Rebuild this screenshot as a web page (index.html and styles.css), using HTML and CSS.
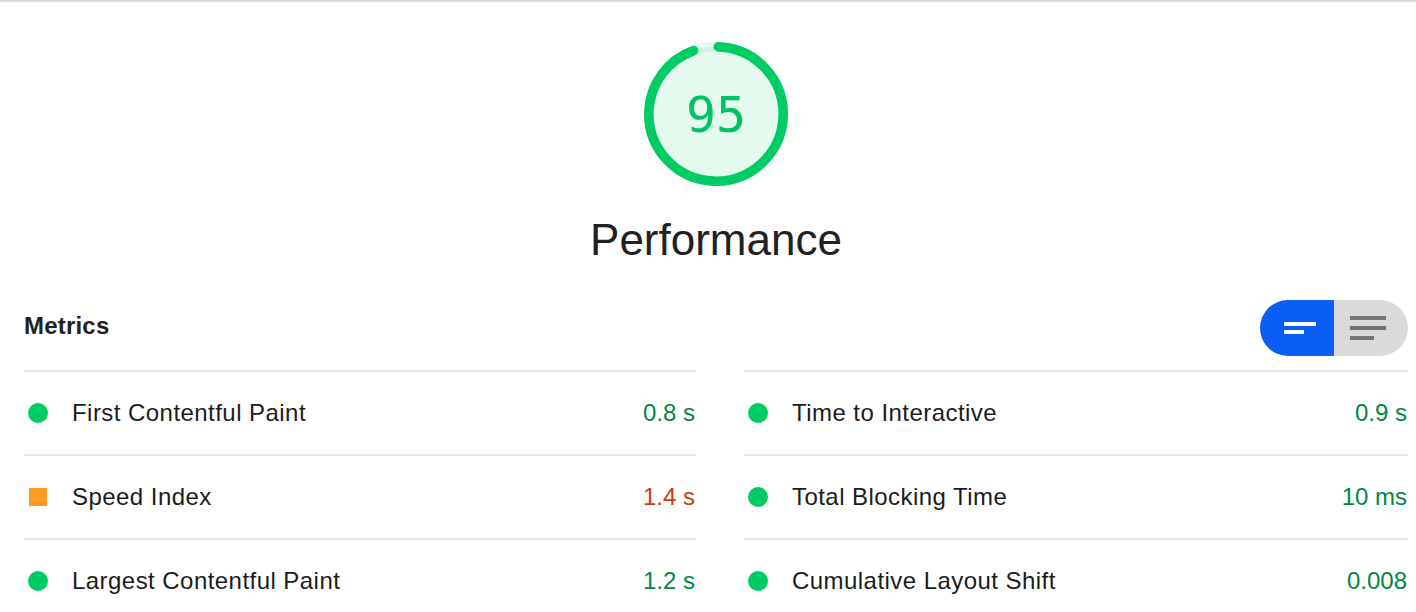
FILE: index.html
```html
<!DOCTYPE html>
<html lang="en">
<head>
<meta charset="utf-8">
<title>Performance</title>
<link rel="stylesheet" href="styles.css">
</head>
<body>
<div class="topbar"></div>
<section class="category">
  <div class="gauge-wrap">
    <div class="gauge">
      <svg class="gauge-svg" viewBox="0 0 120 120" width="144" height="144">
        <circle class="gauge-base" cx="60" cy="60" r="56" stroke-width="8"></circle>
        <circle class="gauge-arc" cx="60" cy="60" r="56" stroke-width="8" transform="rotate(-87.95 60 60)" stroke-dasharray="330.27 351.86"></circle>
      </svg>
      <div class="gauge-pct">95</div>
    </div>
    <div class="gauge-label">Performance</div>
  </div>

  <div class="metrics-header">
    <h2 class="metrics-title">Metrics</h2>
    <div class="toggle">
      <span class="toggle-btn toggle-on">
        <svg width="74" height="56" viewBox="0 0 74 56">
          <rect x="24" y="22" width="32" height="4" fill="#fff"></rect>
          <rect x="24" y="30" width="20" height="4" fill="#fff"></rect>
        </svg>
      </span>
      <span class="toggle-btn toggle-off">
        <svg width="74" height="56" viewBox="0 0 74 56">
          <rect x="16" y="16" width="36" height="4" fill="#757575"></rect>
          <rect x="16" y="26" width="36" height="4" fill="#757575"></rect>
          <rect x="16" y="36" width="24" height="4" fill="#757575"></rect>
        </svg>
      </span>
    </div>
  </div>

  <div class="metrics">
    <div class="metric">
      <span class="icon"><span class="dot"></span></span>
      <span class="metric-name">First Contentful Paint</span>
      <span class="metric-value pass">0.8 s</span>
    </div>
    <div class="metric">
      <span class="icon"><span class="dot"></span></span>
      <span class="metric-name">Time to Interactive</span>
      <span class="metric-value pass">0.9 s</span>
    </div>
    <div class="metric">
      <span class="icon"><span class="square"></span></span>
      <span class="metric-name">Speed Index</span>
      <span class="metric-value average">1.4 s</span>
    </div>
    <div class="metric">
      <span class="icon"><span class="dot"></span></span>
      <span class="metric-name">Total Blocking Time</span>
      <span class="metric-value pass">10 ms</span>
    </div>
    <div class="metric">
      <span class="icon"><span class="dot"></span></span>
      <span class="metric-name">Largest Contentful Paint</span>
      <span class="metric-value pass">1.2 s</span>
    </div>
    <div class="metric">
      <span class="icon"><span class="dot"></span></span>
      <span class="metric-name">Cumulative Layout Shift</span>
      <span class="metric-value pass">0.008</span>
    </div>
  </div>
</section>
</body>
</html>
```

FILE: styles.css
```css
* { box-sizing: border-box; }

html, body {
  margin: 0;
  padding: 0;
  background: #fff;
  color: #212121;
  font-family: "Liberation Sans", Arial, sans-serif;
}

.topbar {
  height: 2px;
  background: #dadada;
}

.category {
  padding: 0 8px 0 24px;
}

.gauge-wrap {
  display: flex;
  flex-direction: column;
  align-items: center;
  padding-top: 40px;
}

.gauge {
  display: grid;
  width: 144px;
  height: 144px;
}

.gauge-svg,
.gauge-pct {
  grid-area: 1 / 1;
}

.gauge-svg {
  display: block;
}

.gauge-base {
  fill: rgba(0, 204, 102, 0.1);
  stroke: rgba(0, 204, 102, 0.1);
}

.gauge-arc {
  fill: none;
  stroke: #00cc66;
  stroke-linecap: round;
}

.gauge-pct {
  align-self: center;
  justify-self: center;
  font-family: "DejaVu Sans Mono", "Liberation Mono", monospace;
  font-size: 50px;
  line-height: 1;
  color: #00c365;
  padding-top: 2px;
}

.gauge-label {
  margin-top: 28px;
  font-size: 44px;
  line-height: 52px;
  color: #212121;
}

.metrics-header {
  display: flex;
  align-items: center;
  justify-content: space-between;
  height: 56px;
  margin-top: 34px;
}

.metrics-title {
  margin: 0;
  font-size: 24px;
  font-weight: bold;
  line-height: 28px;
  letter-spacing: 0.2px;
  color: #212121;
  padding-bottom: 4px;
}

.toggle {
  display: flex;
  height: 56px;
}

.toggle-btn {
  display: block;
  width: 74px;
  height: 56px;
}

.toggle-btn svg {
  display: block;
}

.toggle-on {
  background: #0a5ef7;
  border-radius: 28px 0 0 28px;
}

.toggle-off {
  background: #dadada;
  border-radius: 0 28px 28px 0;
}

.metrics {
  display: grid;
  grid-template-columns: 672px 1fr;
  column-gap: 48px;
  margin-top: 14px;
}

.metric {
  display: flex;
  align-items: center;
  height: 84px;
  border-top: 2px solid #e3e3e3;
  font-size: 24px;
}

.icon {
  display: flex;
  align-items: center;
  justify-content: center;
  width: 20px;
  height: 20px;
  margin-left: 4px;
}

.dot {
  width: 20px;
  height: 20px;
  border-radius: 50%;
  background: #00cc66;
}

.square {
  width: 18px;
  height: 18px;
  background: #fb9a27;
}

.metric-name {
  margin-left: 24px;
  letter-spacing: 0.45px;
  color: #1c1c1c;
}

.metric-value {
  margin-left: auto;
  padding-right: 1px;
}

.metric-value.pass { color: #018642; }
.metric-value.average { color: #c93c10; }
```
